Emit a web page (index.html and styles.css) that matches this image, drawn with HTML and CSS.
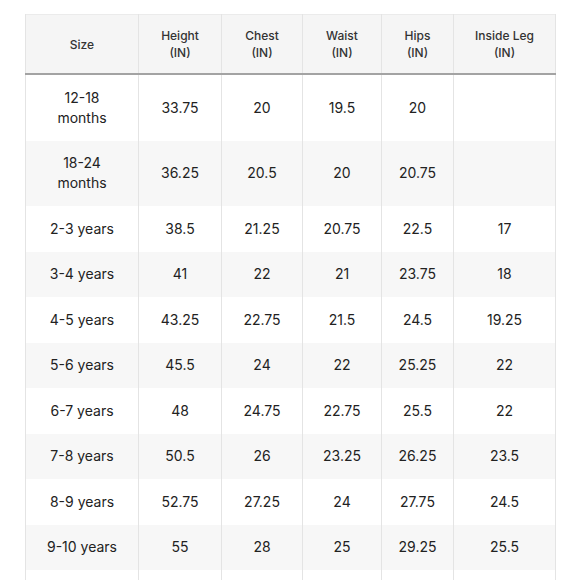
FILE: index.html
```html
<!DOCTYPE html>
<html lang="en">
<head>
<meta charset="utf-8">
<title>Size chart</title>
<link rel="stylesheet" href="styles.css">
</head>
<body>
<table class="chart">
  <colgroup>
    <col class="c-size"><col class="c-h"><col class="c-c"><col class="c-w"><col class="c-hi"><col class="c-l">
  </colgroup>
  <thead>
    <tr>
      <th>Size</th>
      <th>Height<br>(IN)</th>
      <th>Chest<br>(IN)</th>
      <th>Waist<br>(IN)</th>
      <th>Hips<br>(IN)</th>
      <th>Inside Leg<br>(IN)</th>
    </tr>
  </thead>
  <tbody>
    <tr><td>12-18<br>months</td><td>33.75</td><td>20</td><td>19.5</td><td>20</td><td></td></tr>
    <tr><td>18-24<br>months</td><td>36.25</td><td>20.5</td><td>20</td><td>20.75</td><td></td></tr>
    <tr><td>2-3 years</td><td>38.5</td><td>21.25</td><td>20.75</td><td>22.5</td><td>17</td></tr>
    <tr><td>3-4 years</td><td>41</td><td>22</td><td>21</td><td>23.75</td><td>18</td></tr>
    <tr><td>4-5 years</td><td>43.25</td><td>22.75</td><td>21.5</td><td>24.5</td><td>19.25</td></tr>
    <tr><td>5-6 years</td><td>45.5</td><td>24</td><td>22</td><td>25.25</td><td>22</td></tr>
    <tr><td>6-7 years</td><td>48</td><td>24.75</td><td>22.75</td><td>25.5</td><td>22</td></tr>
    <tr><td>7-8 years</td><td>50.5</td><td>26</td><td>23.25</td><td>26.25</td><td>23.5</td></tr>
    <tr><td>8-9 years</td><td>52.75</td><td>27.25</td><td>24</td><td>27.75</td><td>24.5</td></tr>
    <tr><td>9-10 years</td><td>55</td><td>28</td><td>25</td><td>29.25</td><td>25.5</td></tr>
    <tr class="blank"><td></td><td></td><td></td><td></td><td></td><td></td></tr>
  </tbody>
</table>
</body>
</html>
```

FILE: styles.css
```css
html, body {
  margin: 0;
  padding: 0;
  background: #ffffff;
}

body {
  font-family: Inter, "Noto Sans", sans-serif;
  color: #222222;
}

.chart {
  margin: 14px 0 0 25px;
  width: 530px;
  table-layout: fixed;
  border-collapse: collapse;
  border: 1px solid #ebebeb;
}

.c-size { width: 113px; }
.c-h { width: 83px; }
.c-c { width: 81px; }
.c-w { width: 79px; }
.c-hi { width: 72px; }
.c-l { width: 102px; }

.chart th {
  background: #f5f5f5;
  font-size: 12px;
  font-weight: 500;
  line-height: 17px;
  color: #333333;
  padding: 12px 4px;
  text-align: center;
  border-left: 1px solid #e4e4e4;
  border-right: 1px solid #e4e4e4;
  border-bottom: 2px solid #a3a3a3;
}

.chart td {
  font-size: 14px;
  font-weight: 400;
  line-height: 20px;
  padding: 12.75px 4px;
  text-align: center;
  border-left: 1px solid #e4e4e4;
  border-right: 1px solid #e4e4e4;
}

.chart .blank td {
  height: 20px;
}

.chart tbody tr:nth-child(even) td {
  background: #f7f7f7;
}
```
